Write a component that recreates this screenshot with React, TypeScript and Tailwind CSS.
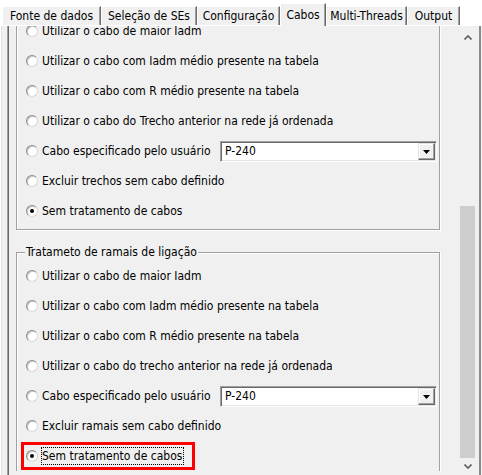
import React from 'react';

interface Option {
  label: string;
  checked?: boolean;
  combo?: boolean;
  focused?: boolean;
}

const tabs = [
  { label: 'Fonte de dados', width: 'w-[99px]' },
  { label: 'Seleção de SEs', width: 'w-[96px]' },
  { label: 'Configuração', width: 'w-[83px]' },
  { label: 'Cabos', width: 'w-[46px]', active: true },
  { label: 'Multi-Threads', width: 'w-[81px]' },
  { label: 'Output', width: 'w-[53px]' },
];

const trechoOptions: Option[] = [
  { label: 'Utilizar o cabo de maior Iadm' },
  { label: 'Utilizar o cabo com Iadm médio presente na tabela' },
  { label: 'Utilizar o cabo com R médio presente na tabela' },
  { label: 'Utilizar o cabo do Trecho anterior na rede já ordenada' },
  { label: 'Cabo especificado pelo usuário', combo: true },
  { label: 'Excluir trechos sem cabo definido' },
  { label: 'Sem tratamento de cabos', checked: true },
];

const ramalOptions: Option[] = [
  { label: 'Utilizar o cabo de maior Iadm' },
  { label: 'Utilizar o cabo com Iadm médio presente na tabela' },
  { label: 'Utilizar o cabo com R médio presente na tabela' },
  { label: 'Utilizar o cabo do trecho anterior na rede já ordenada' },
  { label: 'Cabo especificado pelo usuário', combo: true },
  { label: 'Excluir ramais sem cabo definido' },
  { label: 'Sem tratamento de cabos', checked: true, focused: true },
];

const Radio = ({ checked }: { checked?: boolean }) => (
  <span className="w-[12px] h-[12px] shrink-0 rounded-full bg-white border border-t-[#8c8c8c] border-l-[#8c8c8c] border-b-[#d8d8d8] border-r-[#d8d8d8] shadow-[inset_1px_1px_0_#c8c8c8] flex items-center justify-center">
    {checked && <span className="w-[4px] h-[4px] rounded-full bg-black" />}
  </span>
);

const Combo = () => (
  <div className="w-[217px] h-[21px] shrink-0 bg-white border border-t-[#a0a0a0] border-l-[#a0a0a0] border-b-white border-r-white shadow-[inset_1px_1px_0_#696969,inset_-1px_-1px_0_#e3e3e3] flex items-center p-[1px]">
    <span className="flex-1 pl-[3px]">P-240</span>
    <span className="w-[17px] h-[17px] bg-[#f0f0f0] border border-t-[#e3e3e3] border-l-[#e3e3e3] border-b-[#696969] border-r-[#696969] shadow-[inset_-1px_-1px_0_#a0a0a0,inset_1px_1px_0_#fff] flex items-center justify-center">
      <svg width="7" height="4" viewBox="0 0 7 4" className="mt-[1px]">
        <polygon points="0,0 7,0 3.5,4" fill="#000" />
      </svg>
    </span>
  </div>
);

const OptionRow = ({ option }: { option: Option }) => {
  if (option.focused) {
    return (
      <div className="h-[30px] flex items-center">
        <div className="ml-[4px] w-[174px] h-[28px] border-[3px] border-[#ff0000] pl-[2px] flex items-center gap-[3px]">
          <Radio checked={option.checked} />
          <span className="border border-dotted border-black leading-[16px] pr-[1px]">{option.label}</span>
        </div>
      </div>
    );
  }
  return (
    <div className="h-[30px] flex items-center pl-[9px] gap-[4px]">
      <Radio checked={option.checked} />
      {option.combo ? (
        <>
          <span className="w-[174px] shrink-0 whitespace-nowrap">{option.label}</span>
          <Combo />
        </>
      ) : (
        <span className="whitespace-nowrap">{option.label}</span>
      )}
    </div>
  );
};

const Chevron = ({ down }: { down?: boolean }) => (
  <svg width="8" height="5" viewBox="0 0 8 5">
    <polyline
      points={down ? '0.5,0.5 4,4 7.5,0.5' : '0.5,4.5 4,1 7.5,4.5'}
      fill="none"
      stroke="#606060"
      strokeWidth="1.6"
    />
  </svg>
);

const App = () => {
  return (
    <div
      className="w-[482px] h-[475px] overflow-hidden bg-white text-black text-[12px]"
      style={{ fontFamily: '"DejaVu Sans Condensed", "Liberation Sans", sans-serif' }}
    >
      {/* tab strip */}
      <div className="h-[25px] flex items-end pl-[2px]">
        {tabs.map((tab) =>
          tab.active ? (
            <div
              key={tab.label}
              className={`${tab.width} h-[23px] -mb-[1px] relative z-10 bg-[#f0f0f0] border-t border-l border-white border-r border-r-[#696969] shadow-[inset_-1px_0_0_#a0a0a0] flex items-start justify-center pt-[2px]`}
            >
              {tab.label}
            </div>
          ) : (
            <div
              key={tab.label}
              className={`${tab.width} h-[19px] bg-[#f0f0f0] border-t border-l border-white border-r border-r-[#696969] shadow-[inset_-1px_0_0_#a0a0a0] flex items-center justify-center`}
            >
              {tab.label}
            </div>
          )
        )}
      </div>

      {/* tab page */}
      <div className="h-[450px] bg-[#f0f0f0] border-t border-l border-white shadow-[inset_1px_0_0_#e3e3e3] pl-[6px] pr-[1px] flex">
        <div className="flex-1 flex border-l border-l-[#a0a0a0] border-r-2 border-r-[#8c8c8c] shadow-[inset_1px_0_0_#696969]">
          {/* scrolled content */}
          <div className="w-[450px] ml-[1px] overflow-hidden">
            <div className="ml-[7px] w-[424px] -mt-[10px] pb-[3px] border-l border-r border-b border-[#a0a0a0] shadow-[inset_1px_0_0_#fff,1px_1px_0_#fff]">
              {trechoOptions.map((option) => (
                <OptionRow key={option.label} option={option} />
              ))}
            </div>

            <div className="relative ml-[7px] w-[424px] mt-[22px] pt-[8px] border-l border-r border-t border-[#a0a0a0] shadow-[inset_1px_1px_0_#fff,1px_0_0_#fff]">
              <span className="absolute left-[8px] -top-[9px] px-[1px] bg-[#f0f0f0] leading-[16px]">
                Tratameto de ramais de ligação
              </span>
              {ramalOptions.map((option) => (
                <OptionRow key={option.label} option={option} />
              ))}
            </div>
          </div>

          {/* scrollbar */}
          <div className="w-[17px] flex flex-col bg-[#f0f0f0]">
            <div className="h-[24px] flex items-center justify-center">
              <Chevron />
            </div>
            <div className="h-[157px]" />
            <div className="h-[253px] mx-[1px] bg-[#cdcdcd]" />
            <div className="h-[17px] flex items-center justify-center">
              <Chevron down />
            </div>
          </div>
        </div>
      </div>
    </div>
  );
};

export default App;
